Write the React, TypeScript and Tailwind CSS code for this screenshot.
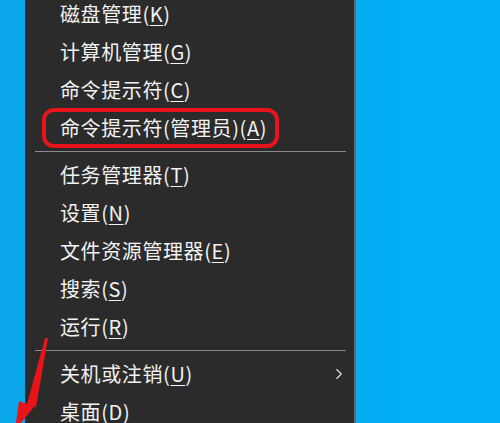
import { ChevronRight } from 'lucide-react'

type Item = { label: string; key: string; highlight?: boolean; submenu?: boolean }

const groups: Item[][] = [
  [
    { label: '磁盘管理', key: 'K' },
    { label: '计算机管理', key: 'G' },
    { label: '命令提示符', key: 'C' },
    { label: '命令提示符(管理员)', key: 'A', highlight: true },
  ],
  [
    { label: '任务管理器', key: 'T' },
    { label: '设置', key: 'N' },
    { label: '文件资源管理器', key: 'E' },
    { label: '搜索', key: 'S' },
    { label: '运行', key: 'R' },
  ],
  [
    { label: '关机或注销', key: 'U', submenu: true },
    { label: '桌面', key: 'D' },
  ],
]

function Label({ item }: { item: Item }) {
  return (
    <span className="whitespace-nowrap">
      {item.label}(<span className="underline decoration-1 underline-offset-[3px]">{item.key}</span>)
    </span>
  )
}

function MenuRow({ item }: { item: Item }) {
  if (item.highlight) {
    return (
      <div className="flex h-[38px] items-center pl-[17px]">
        <div className="flex h-[40px] items-center rounded-[12px] border-[4px] border-[#e8141a] pl-[14px] pr-[8px]">
          <Label item={item} />
        </div>
      </div>
    )
  }
  return (
    <div className="flex h-[38px] items-center justify-between pl-[35px] pr-[6px]">
      <Label item={item} />
      {item.submenu && <ChevronRight size={18} strokeWidth={1.5} className="text-[#e0e0e0]" />}
    </div>
  )
}

export default function App() {
  return (
    <div
      className="relative flex h-[423px] w-[500px] overflow-hidden bg-gradient-to-r from-[#0aa6ea] to-[#02b0f6]"
      style={{ fontFamily: '"Noto Sans CJK SC", "Noto Sans", sans-serif' }}
    >
      <div className="w-[25px] shrink-0" />
      <div className="w-[331px] shrink-0 border-r-2 border-[#5a6a72] bg-[#2b2b2b] text-[20px] tracking-[0.6px] text-[#f2f2f2]">
        <div className="-mt-[5px] flex flex-col">
          {groups.map((g, gi) => (
            <div key={gi} className="flex flex-col">
              {gi > 0 && (
                <div className="flex h-[9px] items-center pl-[10px] pr-[8px]">
                  <div className="h-px w-full bg-[#8a8a8a]" />
                </div>
              )}
              {g.map((item) => (
                <MenuRow key={item.key} item={item} />
              ))}
            </div>
          ))}
        </div>
      </div>

      {/* annotation arrow */}
      <svg className="absolute left-0 top-[330px]" width="60" height="93" viewBox="0 0 60 93">
        <polygon points="48,8 45,8 27,74 19,71 15,100 34,77 29,76 36,77" fill="#e8141a" />
      </svg>
    </div>
  )
}
